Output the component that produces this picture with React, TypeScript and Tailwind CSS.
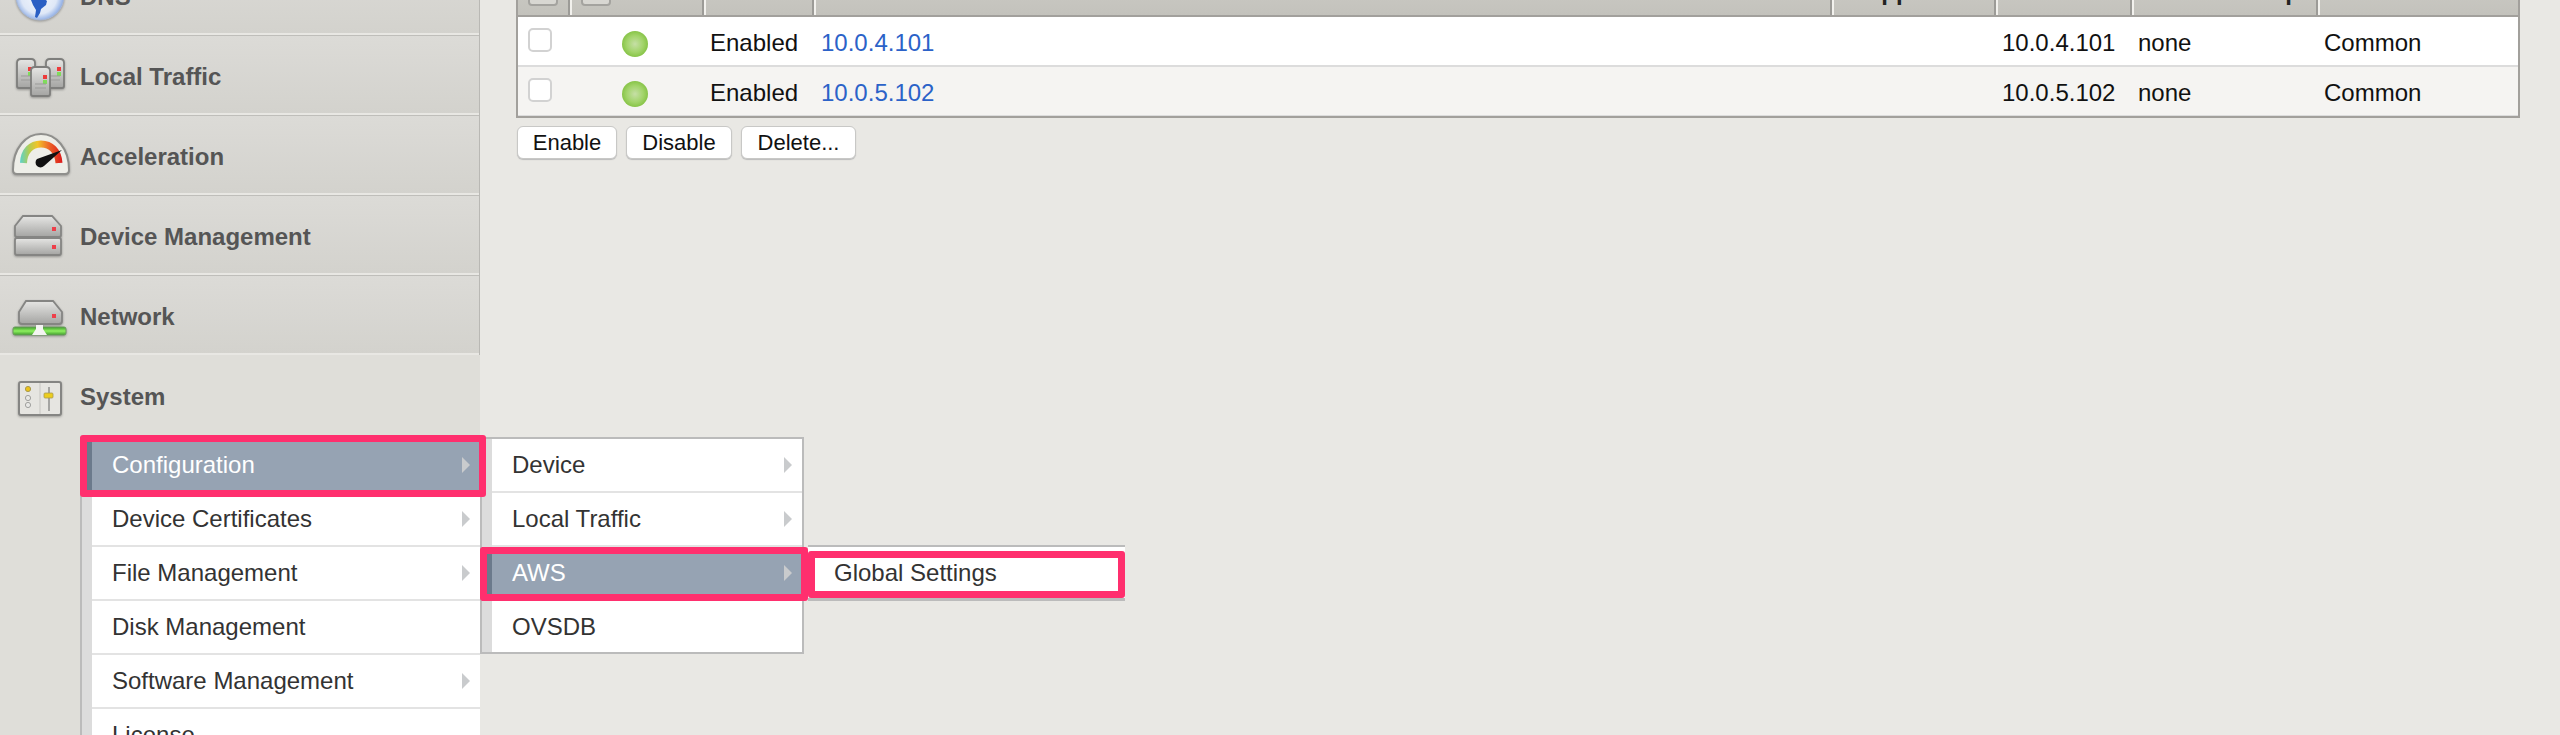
import type { ReactNode } from 'react';

// Sidebar icons are drawn in row coordinates (80x80 box, same x as the page)
const iconClass = 'w-20 h-20 shrink-0 blur-[0.4px] drop-shadow-[0_1px_1px_rgba(0,0,0,0.3)]';

const steel = (
  <linearGradient id="steel" x1="0" y1="0" x2="0" y2="1">
    <stop offset="0" stopColor="#e6e6e4" />
    <stop offset="1" stopColor="#a4a4a2" />
  </linearGradient>
);

function GlobeIcon() {
  return (
    <svg viewBox="0 0 80 80" className={iconClass}>
      <defs>
        <radialGradient id="globe" cx="0.48" cy="0.5" r="0.55">
          <stop offset="0" stopColor="#f4f7fc" />
          <stop offset="0.68" stopColor="#dfe8f7" />
          <stop offset="0.9" stopColor="#9ab6e8" />
          <stop offset="1" stopColor="#7c9cdc" />
        </radialGradient>
      </defs>
      <circle cx="40" cy="41" r="24" fill="url(#globe)" stroke="#a9b8d4" strokeWidth="1" />
      <path d="M31 40 L42 42 L47 46 L46 50 L41 54 L40 58 L37 63 L35 62 L36 55 L33 50 L31 45 Z" fill="#2a5fc4" />
    </svg>
  );
}

function LocalTrafficIcon() {
  const tower = (x: number, y: number, w: number, h: number) => (
    <g>
      <path
        d={`M${x} ${y + 4} q0 -4 4 -4 h${w - 8} q4 0 4 4 v${h - 6} q0 2 -2 2 h-${w - 4} q-2 0 -2 -2 Z`}
        fill="url(#steel)"
        stroke="#7e7e7c"
        strokeWidth="1.8"
      />
      <rect x={x + w - 7} y={y + 8} width="4" height="4" fill="#ee3a3a" />
      <rect x={x + w - 7} y={y + 13} width="4" height="4" fill="#7fdc5a" />
      <path d={`M${x + 4} ${y + h - 12} h${w - 8} M${x + 4} ${y + h - 8} h${w - 8}`} stroke="#9b9b99" />
    </g>
  );
  return (
    <svg viewBox="0 0 80 80" className={iconClass}>
      <defs>{steel}</defs>
      {tower(17, 24, 18, 29)}
      {tower(46, 24, 18, 29)}
      {tower(31, 32, 19, 29)}
    </svg>
  );
}

function GaugeIcon() {
  return (
    <svg viewBox="0 0 80 80" className={iconClass}>
      <defs>
        <linearGradient id="dial" x1="20" y1="0" x2="62" y2="0" gradientUnits="userSpaceOnUse">
          <stop offset="0" stopColor="#5ad2cc" />
          <stop offset="0.22" stopColor="#b4cc50" />
          <stop offset="0.42" stopColor="#f2c428" />
          <stop offset="0.68" stopColor="#ee6a28" />
          <stop offset="1" stopColor="#dc1c1c" />
        </linearGradient>
      </defs>
      <path
        d="M13 55 C13 33 26 19 41 19 C56 19 69 33 69 55 Q69 59 65 59 H17 Q13 59 13 55 Z"
        fill="#eeeee8"
        stroke="#8f8f8c"
        strokeWidth="2"
      />
      <path d="M23.5 48 C24 36 31 29 41 29 C51 29 58 36 59 48" fill="none" stroke="url(#dial)" strokeWidth="7" />
      <path d="M37 44 L62 35 L44 51 A4.5 4.5 0 1 1 37 44 Z" fill="#111" />
    </svg>
  );
}

function DrivesIcon() {
  return (
    <svg viewBox="0 0 80 80" className={iconClass}>
      <defs>{steel}</defs>
      <path
        d="M15 31 L23 21 H52 L61 31 V40 Q61 42 59 42 H17 Q15 42 15 40 Z"
        fill="url(#steel)"
        stroke="#858583"
        strokeWidth="1.8"
      />
      <rect x="15" y="43" width="46" height="17" rx="2" fill="url(#steel)" stroke="#858583" strokeWidth="1.8" />
      <rect x="52" y="32" width="4" height="4" fill="#ee3f4a" />
      <rect x="52" y="50" width="4" height="4" fill="#ee3f4a" />
    </svg>
  );
}

function NetworkIcon() {
  return (
    <svg viewBox="0 0 80 80" className={iconClass}>
      <defs>
        {steel}
        <linearGradient id="link" x1="0" y1="0" x2="0" y2="1">
          <stop offset="0" stopColor="#3f9c2c" />
          <stop offset="0.5" stopColor="#8ef060" />
          <stop offset="1" stopColor="#3f9c2c" />
        </linearGradient>
      </defs>
      <rect x="13" y="52" width="53" height="8" rx="2" fill="url(#link)" stroke="#6c9a60" strokeWidth="1" />
      <path d="M32 60 L36 54 V48 H43 V54 L47 60 Z" fill="#f4f4f2" />
      <path
        d="M19 37 L26 26 H53 L62 37 V46 Q62 49 59 49 H22 Q19 49 19 46 Z"
        fill="url(#steel)"
        stroke="#858583"
        strokeWidth="1.8"
      />
      <rect x="52" y="39" width="4" height="4" fill="#ee3f4a" />
    </svg>
  );
}

function SystemIcon() {
  return (
    <svg viewBox="0 0 80 80" className={iconClass}>
      <rect x="19" y="27" width="42" height="33" rx="2" fill="#e6e5e1" stroke="#858583" strokeWidth="2" />
      <path d="M40 28 V59" stroke="#c6c5c1" strokeWidth="1" />
      <circle cx="28" cy="34" r="2.6" fill="#ecc21a" stroke="#a89a50" />
      <circle cx="28" cy="43" r="2.6" fill="#e8e8e6" stroke="#a0a09e" />
      <circle cx="28" cy="50" r="2.6" fill="#e8e8e6" stroke="#a0a09e" />
      <path d="M49 32 V56" stroke="#a4a4a2" strokeWidth="2" />
      <rect x="44" y="38" width="9" height="5" rx="1" fill="#eccd1e" stroke="#a89a50" strokeWidth="0.8" />
    </svg>
  );
}

const navRows: { label: string; icon: ReactNode }[] = [
  { label: 'DNS', icon: <GlobeIcon /> },
  { label: 'Local Traffic', icon: <LocalTrafficIcon /> },
  { label: 'Acceleration', icon: <GaugeIcon /> },
  { label: 'Device Management', icon: <DrivesIcon /> },
  { label: 'Network', icon: <NetworkIcon /> },
];

function Caret() {
  return (
    <svg viewBox="0 0 8 16" className="w-2 h-4 shrink-0">
      <polygon points="0,0 8,8 0,16" fill="#c9cbcd" />
    </svg>
  );
}

// Pink annotation drawn over a menu row
function Highlight({ className }: { className: string }) {
  return <div className={`absolute z-10 border-[7px] border-[#ff2f6e] rounded-[3px] ${className}`} />;
}

function MenuRow({
  label,
  caret,
  active,
  last,
  children,
}: {
  label: string;
  caret?: boolean;
  active?: boolean;
  last?: boolean;
  children?: ReactNode;
}) {
  return (
    <div className={`relative flex shrink-0 ${last ? 'h-[51px]' : 'h-[54px]'}`}>
      <div className={`w-[10px] shrink-0 ${active ? 'bg-[#6b7a8c]' : 'bg-[#dcdcdc]'}`} />
      <div
        className={`flex flex-1 items-center justify-between pl-5 pr-[10px] text-[24px] ${
          active ? 'bg-[#96a3b3] text-white' : 'bg-white text-[#333]'
        } ${last ? '' : 'border-b-2 border-[#e3e3e3]'}`}
      >
        <span>{label}</span>
        {caret && <Caret />}
      </div>
      {children}
    </div>
  );
}

const cellText = 'flex items-center pt-[3px] text-[24px] text-[#111]';

function NodeRow({ address, striped }: { address: string; striped?: boolean }) {
  return (
    <div
      className={`grid grid-cols-[52px_134px_110px_1018px_164px_136px_186px_1fr] ${
        striped ? 'h-[49px] border-b border-[#dcdcdc] bg-[#f5f4f2]' : 'h-[50px] border-b-2 border-[#dcdcdc] bg-white'
      }`}
    >
      <div className="flex items-center pl-[10px] pb-[2px]">
        <div className="w-6 h-6 rounded-[5px] border-2 border-[#d2d2d2] bg-white" />
      </div>
      <div className="flex items-center pl-[52px] pt-[6px]">
        <div className="w-[26px] h-[26px] rounded-full bg-[radial-gradient(circle_at_50%_50%,#c6dfa6_0%,#a2d46a_45%,#86c346_72%,#5da327_100%)]" />
      </div>
      <div className={`${cellText} pl-[6px]`}>Enabled</div>
      <div className={`${cellText} pl-[7px] !text-[#2b62c8]`}>{address}</div>
      <div />
      <div className={`${cellText} pl-[6px]`}>{address}</div>
      <div className={`${cellText} pl-[6px]`}>none</div>
      <div className={`${cellText} pl-[6px]`}>Common</div>
    </div>
  );
}

const headCell = 'flex items-end h-full border-r-2 border-[#9c9b97] shadow-[2px_0_0_#f2f1ed]';

function ActionButton({ label, width }: { label: string; width: string }) {
  return (
    <button
      className={`h-[33px] ${width} rounded-[6px] border border-[#c8c8c6] bg-white text-[22px] leading-none text-[#111] shadow-[0_1px_1px_#bbb]`}
    >
      {label}
    </button>
  );
}

export default function App() {
  return (
    <div className="relative flex w-[2560px] h-[735px] overflow-hidden bg-[#e9e8e4] font-['Liberation_Sans',Arial,sans-serif]">
      {/* left nav, scrolled so the DNS row is cut off */}
      <div className="w-[480px] shrink-0 -mt-[45px] flex flex-col">
        {navRows.map((row) => (
          <div
            key={row.label}
            className="flex items-center h-20 shrink-0 border-r border-[#b9b8b4] bg-gradient-to-b from-[#dcdbd7] to-[#d3d2cd] shadow-[inset_0_1px_0_#bfbeba,inset_0_-2px_0_#e8e7e3]"
          >
            {row.icon}
            <span className="pt-[3px] text-[24px] font-bold text-[#555]">{row.label}</span>
          </div>
        ))}
        <div className="flex-1 bg-[#dfded9]">
          <div className="flex items-center h-20">
            <SystemIcon />
            <span className="pt-[3px] text-[24px] font-bold text-[#555]">System</span>
          </div>
        </div>
      </div>

      {/* node list */}
      <div className="flex-1 min-w-0 pl-[36px] pr-[40px] -mt-[34px]">
        <div className="border-x-2 border-b-2 border-[#a2a09c]">
          <div className="grid grid-cols-[52px_134px_110px_1018px_164px_136px_186px_1fr] h-[51px] border-b-2 border-[#a2a09c] bg-gradient-to-b from-[#cfcec8] to-[#c3c2bc] text-[24px] font-bold text-[#222]">
            <div className={headCell}>
              <div className="ml-[10px] mb-[9px] w-[30px] h-6 rounded-[4px] border-2 border-[#a4a39f] bg-[#d8d7d2]" />
            </div>
            <div className={headCell}>
              <div className="ml-[11px] mb-[9px] w-[30px] h-6 rounded-[4px] border-2 border-[#a4a39f] bg-[#d8d7d2]" />
            </div>
            <div className={headCell} />
            <div className={headCell} />
            <div className={`${headCell} pl-8 pb-[11px] leading-none`}>Application</div>
            <div className={headCell} />
            <div className={`${headCell} pb-[11px] pl-[96px] leading-none`}>Group</div>
            <div />
          </div>
          <NodeRow address="10.0.4.101" />
          <NodeRow address="10.0.5.102" striped />
        </div>
        <div className="flex gap-[9px] pt-[8px] pl-px">
          <ActionButton label="Enable" width="w-[100px]" />
          <ActionButton label="Disable" width="w-[106px]" />
          <ActionButton label="Delete..." width="w-[115px]" />
        </div>
      </div>

      {/* flyout menus over the page */}
      <div className="absolute left-[80px] top-[437px] w-[400px] flex flex-col border-l-2 border-[#bbb] pt-[2px]">
        <MenuRow label="Configuration" caret active>
          <Highlight className="-left-[2px] -right-[6px] -top-1 -bottom-1" />
        </MenuRow>
        <MenuRow label="Device Certificates" caret />
        <MenuRow label="File Management" caret />
        <MenuRow label="Disk Management" />
        <MenuRow label="Software Management" caret />
        <MenuRow label="License" />
      </div>

      <div className="absolute left-[480px] top-[437px] w-[324px] flex flex-col border-2 border-[#bbb]">
        <MenuRow label="Device" caret />
        <MenuRow label="Local Traffic" caret />
        <MenuRow label="AWS" caret active>
          <Highlight className="-left-[2px] -right-[6px] top-0 bottom-0" />
        </MenuRow>
        <MenuRow label="OVSDB" last />
      </div>

      <div className="absolute left-[808px] top-[545px] w-[317px] h-[56px] border-t-2 border-b-[3px] border-[#bbb] bg-white pt-[4px]">
        <div className="flex items-center h-[47px] pl-[26px] border-[7px] border-[#ff2f6e] rounded-[3px] text-[24px] text-[#333]">
          <span className="-ml-[7px] pb-[3px]">Global Settings</span>
        </div>
      </div>
    </div>
  );
}
